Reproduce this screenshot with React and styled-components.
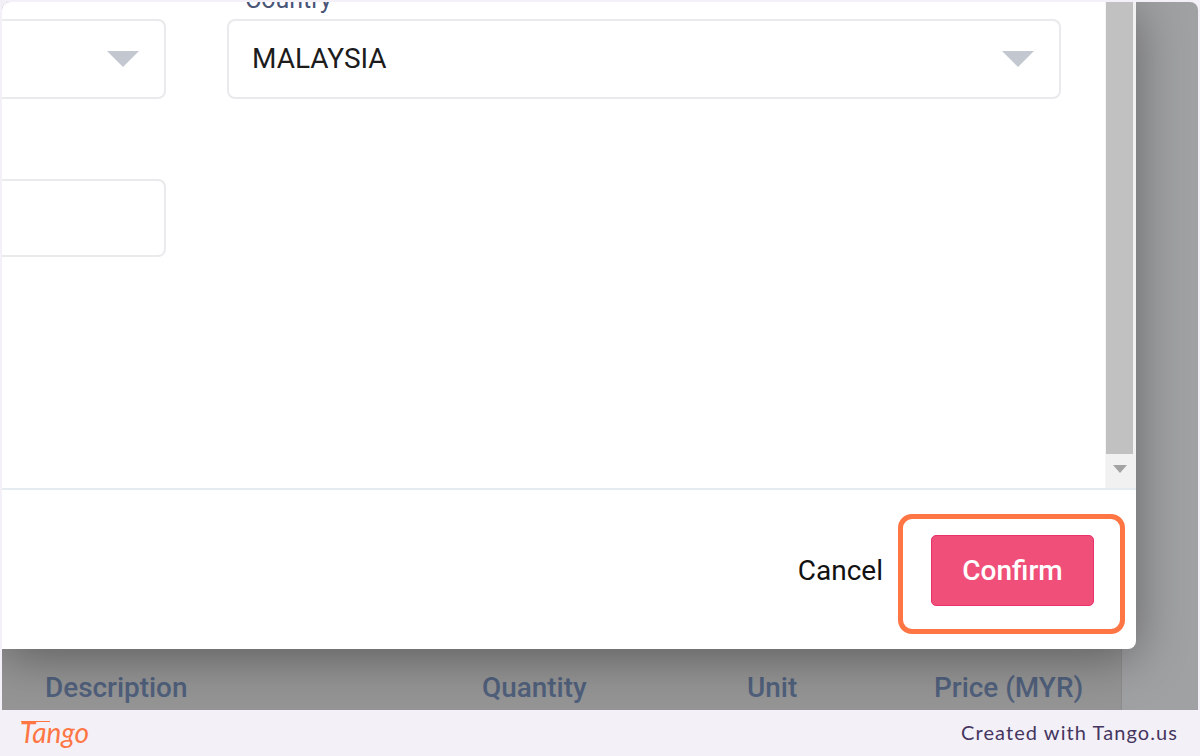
import React from 'react';
import styled, { createGlobalStyle } from 'styled-components';

const GlobalStyle = createGlobalStyle`
    html, body {
        margin: 0;
        padding: 0;
        background: #f3f1f7;
    }
    * {
        box-sizing: border-box;
    }
`;

const Page = styled.div`
    width: 1200px;
    height: 756px;
    display: flex;
    flex-direction: column;
    overflow: hidden;
    font-family: Roboto, "Liberation Sans", sans-serif;
`;

const Shot = styled.div`
    height: 708px;
    margin: 2px 2px 0;
    display: flex;
    flex-direction: column;
    overflow: hidden;
    border-radius: 8px 8px 0 0;
    background: #a0a1a3;
`;

const Modal = styled.div`
    position: relative;
    z-index: 1;
    width: 1134px;
    height: 647px;
    flex-shrink: 0;
    display: flex;
    flex-direction: column;
    background: #fff;
    border-radius: 0 0 8px 0;
    box-shadow: 0 8px 50px rgba(0, 0, 0, 0.38);
`;

const Body = styled.div`
    height: 486px;
    display: flex;
    overflow: hidden;
`;

const Form = styled.div`
    flex: 1;
    display: grid;
    grid-template-columns: 164px 834px;
    grid-auto-rows: min-content;
    column-gap: 61px;
    margin-top: -15px;
`;

const Field = styled.div`
    display: flex;
    flex-direction: column;
    gap: 6px;
    margin-bottom: ${(p) => p.$gap || 0}px;
`;

const Label = styled.label`
    height: 26px;
    padding-left: 18px;
    font-size: 25px;
    line-height: 26px;
    color: #4a5578;
`;

const Box = styled.div`
    height: ${(p) => p.$height}px;
    display: flex;
    align-items: center;
    justify-content: space-between;
    padding: 0 25px 0 23px;
    background: #fff;
    border: 2px solid #e9eaec;
    border-radius: ${(p) => (p.$cut ? '0 8px 8px 0' : '8px')};
    border-left-width: ${(p) => (p.$cut ? 0 : 2)}px;
    font-size: 28px;
    color: #1c1c1c;
`;

const Value = styled.span`
    margin-bottom: 2px;
`;

const Caret = styled.span`
    width: 0;
    height: 0;
    margin-left: auto;
    border-left: 16px solid transparent;
    border-right: 16px solid transparent;
    border-top: 16px solid #c3c8d0;
`;

const Scrollbar = styled.div`
    width: 31px;
    margin-left: auto;
    display: flex;
    flex-direction: column;
    align-items: center;
    background: #f1f1f1;
    border-left: 1px solid #f6f6f6;
    padding-right: 3px;
`;

const Thumb = styled.div`
    width: 27px;
    height: 452px;
    background: #c1c1c1;
`;

const ScrollArrow = styled.span`
    width: 0;
    height: 0;
    margin-top: 11px;
    border-left: 7px solid transparent;
    border-right: 7px solid transparent;
    border-top: 8px solid #a3a3a3;
`;

const Footer = styled.div`
    flex: 1;
    display: flex;
    align-items: center;
    justify-content: flex-end;
    gap: 48px;
    padding: 2px 42px 0 0;
    border-top: 2px solid #e6ebf0;
`;

const CancelButton = styled.button`
    padding: 0;
    border: 0;
    background: none;
    font-family: inherit;
    font-size: 28px;
    color: #111;
`;

const ConfirmWrap = styled.div`
    position: relative;
`;

const ConfirmButton = styled.button`
    display: block;
    width: 163px;
    height: 71px;
    padding: 0;
    background: #ef4f78;
    border: 1px solid #e8336a;
    border-radius: 5px;
    font-family: inherit;
    font-size: 28px;
    font-weight: 500;
    color: #fff;
`;

const Highlight = styled.div`
    position: absolute;
    top: -21px;
    right: -31px;
    bottom: -28px;
    left: -33px;
    border: 5px solid #ff7644;
    border-radius: 14px;
    pointer-events: none;
`;

const Table = styled.div`
    flex: 1;
    width: 1120px;
    background: #959595;
    border-right: 1px solid #8d8d8d;
`;

const HeadRow = styled.div`
    height: 61px;
    display: grid;
    grid-template-columns: 438px 265px 187px 1fr;
    align-items: center;
    padding: 16px 0 0 43px;
    font-size: 27.9px;
    font-weight: 500;
    white-space: nowrap;
    color: #50607c;

    span:first-child {
        margin-right: -1px;
    }
`;

const HeadCell = styled.span`
    margin-left: ${(p) => p.$nudge || 0}px;
`;

const TangoBar = styled.div`
    flex: 1;
    display: flex;
    align-items: center;
    justify-content: space-between;
    padding: 0 22px 2px 20px;
    background: #f3f1f7;
`;

const TangoMark = styled.span`
    position: relative;
    font-family: Lato, "Open Sans", sans-serif;
    font-style: italic;
    font-size: 28px;
    line-height: 1;
    color: #ff7644;

    &::before {
        content: '';
        position: absolute;
        top: 3px;
        left: 1px;
        width: 29px;
        height: 1px;
        background: #ff7644;
    }
`;

const TangoCredit = styled.span`
    font-family: Lato, "Open Sans", sans-serif;
    font-size: 20px;
    letter-spacing: 1.08px;
    color: #453560;
`;

export default function App() {
    return (
        <>
            <GlobalStyle />
            <Page>
                <Shot>
                    <Modal>
                        <Body>
                            <Form>
                                <Field $gap={48}>
                                    <Label />
                                    <Box $height={80} $cut>
                                        <Caret />
                                    </Box>
                                </Field>
                                <Field $gap={48}>
                                    <Label>Country</Label>
                                    <Box $height={80}>
                                        <Value>MALAYSIA</Value>
                                        <Caret />
                                    </Box>
                                </Field>
                                <Field>
                                    <Label />
                                    <Box $height={78} $cut />
                                </Field>
                            </Form>
                            <Scrollbar>
                                <Thumb />
                                <ScrollArrow />
                            </Scrollbar>
                        </Body>
                        <Footer>
                            <CancelButton>Cancel</CancelButton>
                            <ConfirmWrap>
                                <ConfirmButton>Confirm</ConfirmButton>
                                <Highlight />
                            </ConfirmWrap>
                        </Footer>
                    </Modal>
                    <Table>
                        <HeadRow>
                            <HeadCell>Description</HeadCell>
                            <HeadCell $nudge={-1}>Quantity</HeadCell>
                            <HeadCell $nudge={-1}>Unit</HeadCell>
                            <HeadCell $nudge={-1}>Price (MYR)</HeadCell>
                        </HeadRow>
                    </Table>
                </Shot>
                <TangoBar>
                    <TangoMark>Tango</TangoMark>
                    <TangoCredit>Created with Tango.us</TangoCredit>
                </TangoBar>
            </Page>
        </>
    );
}
